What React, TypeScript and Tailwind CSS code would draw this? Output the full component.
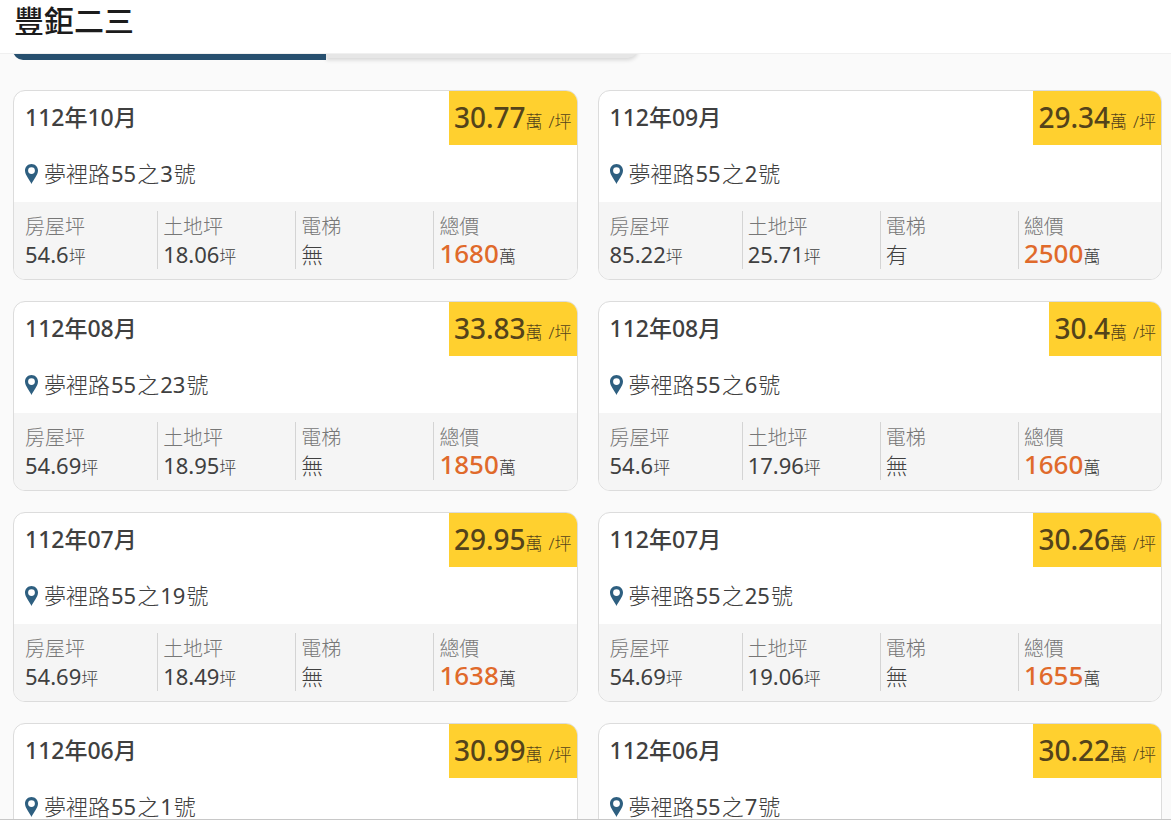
type Deal = {
  date: string;
  price: string;
  address: string;
  house: string;
  land: string;
  elevator: string;
  total: string;
};

const deals: Deal[] = [
  { date: "112年10月", price: "30.77", address: "夢裡路55之3號", house: "54.6", land: "18.06", elevator: "無", total: "1680" },
  { date: "112年09月", price: "29.34", address: "夢裡路55之2號", house: "85.22", land: "25.71", elevator: "有", total: "2500" },
  { date: "112年08月", price: "33.83", address: "夢裡路55之23號", house: "54.69", land: "18.95", elevator: "無", total: "1850" },
  { date: "112年08月", price: "30.4", address: "夢裡路55之6號", house: "54.6", land: "17.96", elevator: "無", total: "1660" },
  { date: "112年07月", price: "29.95", address: "夢裡路55之19號", house: "54.69", land: "18.49", elevator: "無", total: "1638" },
  { date: "112年07月", price: "30.26", address: "夢裡路55之25號", house: "54.69", land: "19.06", elevator: "無", total: "1655" },
  { date: "112年06月", price: "30.99", address: "夢裡路55之1號", house: "54.69", land: "18.49", elevator: "無", total: "1695" },
  { date: "112年06月", price: "30.22", address: "夢裡路55之7號", house: "54.69", land: "18.49", elevator: "無", total: "1653" },
];

function Pin() {
  return (
    <svg viewBox="0 0 13 20" className="h-5 w-[13px] shrink-0" aria-hidden="true">
      <path
        fill="#2e5f80"
        fillRule="evenodd"
        d="M6.5 0C2.9 0 0 2.9 0 6.5C0 11 4.6 15.5 6.5 20C8.4 15.5 13 11 13 6.5C13 2.9 10.1 0 6.5 0ZM6.5 3.2A3.4 3.4 0 1 1 6.5 10A3.4 3.4 0 1 1 6.5 3.2Z"
      />
    </svg>
  );
}

/* Digits are set in the regular weight, the characters around them in light. */
function Address({ text }: { text: string }) {
  return (
    <span className="font-light">
      {text.split(/(\d+)/).map((part, i) =>
        i % 2 === 1 ? (
          <span key={i} className="px-px font-normal">
            {part}
          </span>
        ) : (
          part
        ),
      )}
    </span>
  );
}

function Stat({ label, value, unit, first, strong }: { label: string; value: string; unit?: string; first?: boolean; strong?: boolean }) {
  return (
    <div className={first ? "pl-1.5" : "border-l border-[#d4d4d4] pl-[5px]"}>
      <dt className="h-[29px] text-xl leading-[31px] font-light text-[#777777]">{label}</dt>
      <dd className="h-[29px] text-[22px] leading-[29px] text-[#404040]">
        {strong ? (
          <span className="text-[26px] leading-none font-medium text-[#e06a2b]">{value}</span>
        ) : (
          <span className={unit ? "" : "font-light"}>{value}</span>
        )}
        {unit && <span className="text-[17px] leading-none font-light">{unit}</span>}
      </dd>
    </div>
  );
}

function DealCard({ deal }: { deal: Deal }) {
  return (
    <article className="overflow-hidden rounded-xl border border-[#dcdcdc] bg-white">
      <div className="flex items-start justify-between">
        <h2 className="pl-[11px] text-[23px] leading-[52px] font-medium text-[#404040]">{deal.date}</h2>
        <p className="h-[54px] bg-[#ffd02f] px-[5px] text-[28px] leading-[52px] font-medium text-[#54431a]">
          {deal.price}
          <span className="text-[17px] leading-none font-light">
            萬<span className="ml-1.5">/坪</span>
          </span>
        </p>
      </div>
      <p className="flex h-[57px] items-center gap-1.5 pl-[11px] text-[22px] leading-[57px] text-[#404040]">
        <Pin />
        <Address text={deal.address} />
      </p>
      <dl className="grid grid-cols-4 bg-[#f5f5f5] px-[5px] pt-[9px] pb-2.5">
        <Stat label="房屋坪" value={deal.house} unit="坪" first />
        <Stat label="土地坪" value={deal.land} unit="坪" />
        <Stat label="電梯" value={deal.elevator} />
        <Stat label="總價" value={deal.total} unit="萬" strong />
      </dl>
    </article>
  );
}

export default function App() {
  return (
    <div className="relative flex h-screen flex-col overflow-hidden bg-[#fafafa] font-['Noto_Sans','Noto_Sans_CJK_TC',sans-serif]">
      <header className="z-10 h-[54px] shrink-0 border-b border-[#f0f0f0] bg-white px-3.5">
        <h1 className="text-[30px] leading-[42px] font-medium text-[#1c1c1c]">豐鉅二三</h1>
      </header>
      <main className="min-h-0 flex-1 pr-[9px] pl-[13px]">
        <div className="-mt-[34px] flex h-10 w-[54.4%]">
          <span className="z-[1] flex-1 rounded-l-[10px] bg-[#27506f]" />
          <span className="mb-0.5 flex-1 rounded-r-[10px] bg-[#e6e6e6] shadow-[0_2px_4px_rgba(0,0,0,0.15)]" />
        </div>
        <div className="mt-[30px] grid grid-cols-2 gap-x-5 gap-y-[21px]">
          {deals.map((deal) => (
            <DealCard key={deal.address} deal={deal} />
          ))}
        </div>
      </main>
      <div className="absolute inset-x-0 bottom-0 h-px bg-[#c8c8c8]" />
    </div>
  );
}
